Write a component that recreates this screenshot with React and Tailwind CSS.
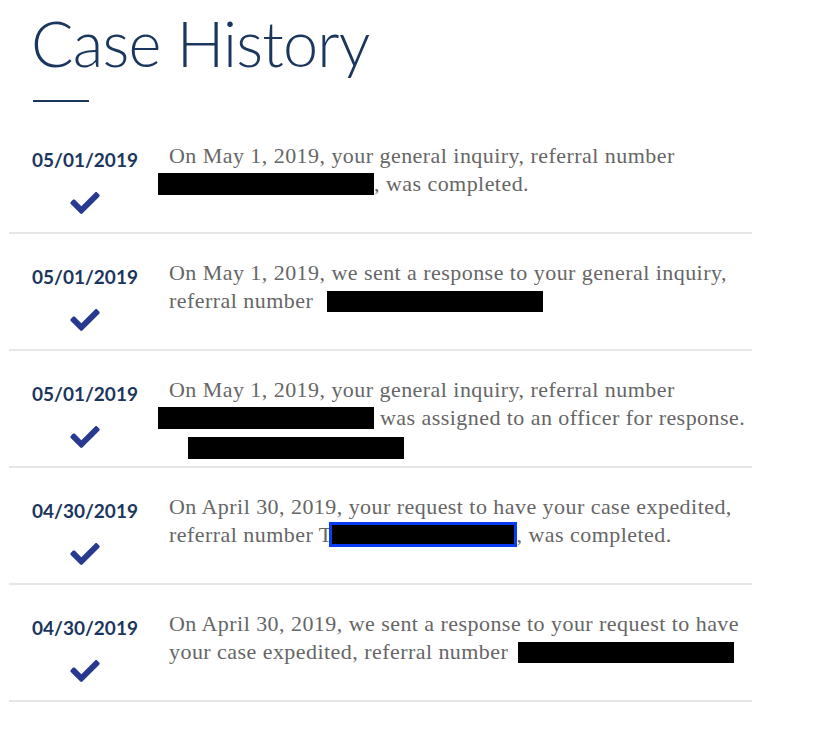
const items = [
  {
    date: '05/01/2019',
    body: (
      <>
        On May 1, 2019, your general inquiry, referral number
        <br />
        <span className="inline-block align-[-4px] w-[216px] h-[22px] bg-black -ml-[11px]"></span>, was completed.
      </>
    ),
  },
  {
    date: '05/01/2019',
    body: (
      <>
        On May 1, 2019, we sent a response to your general inquiry,
        <br />
        referral number <span className="inline-block align-[-4px] w-[216px] h-[21px] bg-black ml-[8px]"></span>
      </>
    ),
  },
  {
    date: '05/01/2019',
    body: (
      <>
        On May 1, 2019, your general inquiry, referral number
        <br />
        <span className="inline-block align-[-4px] w-[216px] h-[22px] bg-black -ml-[11px]"></span> was assigned to an officer for response.
        <br />
        <span className="inline-block align-[-6px] w-[216px] h-[22px] bg-black ml-[19px]"></span>
      </>
    ),
  },
  {
    date: '04/30/2019',
    body: (
      <>
        On April 30, 2019, your request to have your case expedited,
        <br />
        referral number T
        <span className="inline-block align-[-5px] w-[188px] h-[25px] bg-black border-[3px] border-[#0b3cf5] -ml-[4px]"></span>, was completed.
      </>
    ),
  },
  {
    date: '04/30/2019',
    body: (
      <>
        On April 30, 2019, we sent a response to your request to have
        <br />
        <span className="whitespace-nowrap">
          your case expedited, referral number <span className="inline-block align-[-4px] w-[216px] h-[21px] bg-black ml-[4px]"></span>
        </span>
      </>
    ),
  },
];

const Check = () => (
  <svg width="30" height="22" viewBox="0 64 512 384" className="fill-[#283a8f]">
    <path d="M173.898 439.404l-166.4-166.4c-9.997-9.997-9.997-26.206 0-36.204l36.203-36.204c9.997-9.998 26.207-9.998 36.204 0L192 312.69 432.095 72.596c9.997-9.997 26.207-9.997 36.204 0l36.203 36.204c9.997 9.997 9.997 26.206 0 36.204l-294.4 294.401c-9.998 9.997-26.207 9.997-36.204-.001z" />
  </svg>
);

const App = () => {
  return (
    <div className="w-[816px] h-[750px] bg-white overflow-hidden">
      <div className="pl-[31px] pt-[11px]">
        <h1 className="text-[63px] leading-none font-light tracking-[-0.8px] text-[#1b365d] font-['Lato',sans-serif]">
          Case History
        </h1>
        <div className="mt-[26px] mb-[15px] ml-[2px] w-[56px] h-[2px] bg-[#1b365d]"></div>
      </div>

      <div className="ml-[9px] w-[743px]">
        {items.map((item, i) => (
          <div key={i} className="flex h-[117px] border-b-2 border-[#e6e6e6] pt-[25px]">
            <div className="w-[152px] flex flex-col items-center">
              <div className="mt-[6px] text-[19px] leading-[24px] font-bold text-[#1b365d] font-['Lato',sans-serif]">
                {item.date}
              </div>
              <div className="mt-[20px]">
                <Check />
              </div>
            </div>
            <div className="flex-1 pl-[8px] text-[22px] leading-[28px] tracking-[0.45px] text-[#666666] font-['Liberation_Serif',serif]">
              {item.body}
            </div>
          </div>
        ))}
      </div>
    </div>
  );
};

export default App;
